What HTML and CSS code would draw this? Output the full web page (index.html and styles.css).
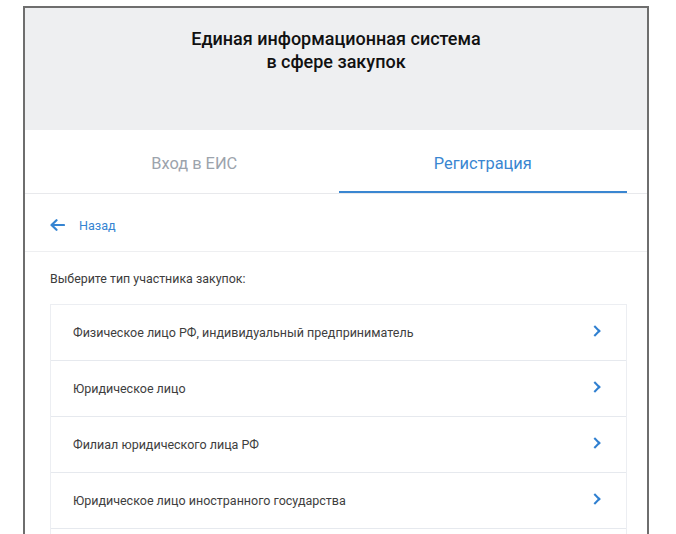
FILE: index.html
```html
<!DOCTYPE html>
<html lang="ru">
<head>
  <meta charset="UTF-8" />
  <meta name="viewport" content="width=device-width, initial-scale=1.0"/>
  <title>ЕИС — Регистрация</title>
  <link rel="stylesheet" href="styles.css">
</head>
<body>

  <div class="okno">
    <div class="shapka">
      <h1>Единая информационная система<br>в сфере закупок</h1>
    </div>

    <div class="vkladki">
      <a class="vkladka" href="#">Вход в ЕИС</a>
      <a class="vkladka aktivnaya" href="#">Регистрация</a>
    </div>

    <div class="nazad">
      <a href="#">
        <svg width="15" height="12" viewBox="0 0 15 12">
          <path d="M14 6H2M6.5 1.2L1.5 6l5 4.8" fill="none" stroke="#3584d2" stroke-width="2.2" stroke-linecap="round" stroke-linejoin="round"/>
        </svg>
        <span>Назад</span>
      </a>
    </div>

    <div class="soderzhimoe">
      <p class="podskazka">Выберите тип участника закупок:</p>
      <div class="spisok">
        <a class="punkt" href="#">Физическое лицо РФ, индивидуальный предприниматель<span class="strelka"></span></a>
        <a class="punkt" href="#">Юридическое лицо<span class="strelka"></span></a>
        <a class="punkt" href="#">Филиал юридического лица РФ<span class="strelka"></span></a>
        <a class="punkt" href="#">Юридическое лицо иностранного государства<span class="strelka"></span></a>
        <a class="punkt" href="#"></a>
      </div>
    </div>
  </div>

</body>
</html>
```

FILE: styles.css
```css
body {
  margin: 0;
  background: #fff;
  font-family: Roboto, "Liberation Sans", Arial, sans-serif;
  overflow: hidden;
  height: 534px;
}

a {
  text-decoration: none;
}

.okno {
  margin: 6px 0 0 23px;
  width: 622px;
  height: 528px;
  border: 2px solid #6e6e6e;
  border-bottom: none;
  background: #fff;
  overflow: hidden;
}

.shapka {
  height: 122px;
  background: #eeeff1;
  padding-top: 19px;
  box-sizing: border-box;
}

.shapka h1 {
  margin: 0;
  font-size: 18px;
  font-weight: 500;
  line-height: 23px;
  text-align: center;
  color: #111;
}

.vkladki {
  display: flex;
  padding: 0 20px 0 25px;
  border-bottom: 1px solid #e8e9ec;
}

.vkladka {
  flex: 1;
  text-align: center;
  font-size: 16.4px;
  line-height: 22px;
  padding: 23px 0 16px;
  color: #9ca3ac;
  border-bottom: 2px solid transparent;
}

.vkladka.aktivnaya {
  color: #3a86d1;
  border-bottom-color: #3a86d1;
}

.nazad {
  height: 52px;
  padding: 5px 0 0 25px;
  display: flex;
  align-items: center;
  border-bottom: 1px solid #eeeff1;
}

.nazad a {
  display: flex;
  align-items: center;
  gap: 14px;
  font-size: 12.6px;
  color: #3584d2;
}

.soderzhimoe {
  padding: 19px 20px 0 25px;
}

.podskazka {
  margin: 0 0 17px;
  font-size: 12.4px;
  line-height: 16px;
  color: #3c3c3c;
}

.spisok {
  border: 1px solid #eceef2;
}

.punkt {
  display: flex;
  align-items: center;
  justify-content: space-between;
  height: 55px;
  padding: 0 27px 0 22px;
  font-size: 12.5px;
  color: #3e3e3e;
  border-top: 1px solid #e6e9ee;
}

.punkt:first-child {
  border-top: none;
}

.strelka {
  width: 6px;
  height: 6px;
  border-top: 2.2px solid #2f7fd0;
  border-right: 2.2px solid #2f7fd0;
  transform: rotate(45deg);
  margin-top: -3px;
}
```
